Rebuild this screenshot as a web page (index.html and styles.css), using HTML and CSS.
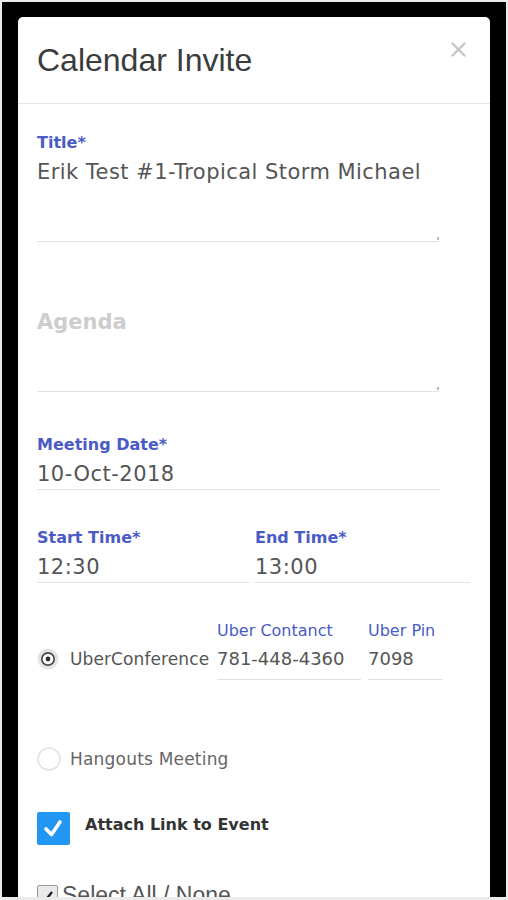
FILE: index.html
```html
<!DOCTYPE html>
<html>
<head>
<meta charset="UTF-8">
<title>Calendar Invite</title>
<link rel="stylesheet" href="styles.css">
</head>
<body>
<div class="frame">
	<div class="modal">
		<div class="modal-header">
			<h4 class="modal-title">Calendar Invite</h4>
			<span class="close"><svg width="15" height="15" viewBox="0 0 15 15"><path d="M1.5 1.5L13.5 13.5M13.5 1.5L1.5 13.5" stroke="#c6c6c6" stroke-width="2.4" stroke-linecap="round"/></svg></span>
		</div>
		<div class="modal-body">
			<div class="field">
				<label class="lbl">Title*</label>
				<div class="area">Erik Test #1-Tropical Storm Michael</div>
			</div>
			<div class="field agenda">
				<div class="area"><span class="ph">Agenda</span></div>
			</div>
			<div class="field date">
				<label class="lbl">Meeting Date*</label>
				<div class="input">10-Oct-2018</div>
			</div>
			<div class="times">
				<div class="field col-start">
					<label class="lbl">Start Time*</label>
					<div class="input">12:30</div>
				</div>
				<div class="field col-end">
					<label class="lbl">End Time*</label>
					<div class="input">13:00</div>
				</div>
			</div>
			<div class="uber">
				<div class="opt opt-uber">
					<svg class="radio" width="22" height="22" viewBox="0 0 22 22"><circle cx="11" cy="11" r="10.5" fill="#e4e4e4"/><circle cx="11" cy="11" r="6.2" fill="#fff" stroke="#4a4a4a" stroke-width="1.7"/><circle cx="11" cy="11" r="2.4" fill="#2e2e2e"/></svg>
					<span>UberConference</span>
				</div>
				<div class="sub sub-contact">
					<label class="sublbl">Uber Contanct</label>
					<div class="subval">781-448-4360</div>
				</div>
				<div class="sub sub-pin">
					<label class="sublbl">Uber Pin</label>
					<div class="subval">7098</div>
				</div>
			</div>
			<div class="opt opt-hangouts">
				<svg class="radio" width="24" height="24" viewBox="0 0 24 24"><circle cx="12" cy="12" r="11" fill="#fff" stroke="#e2e2e2" stroke-width="1.6"/></svg>
				<span>Hangouts Meeting</span>
			</div>
			<div class="check-row">
				<span class="check-box"><svg width="33" height="33" viewBox="0 0 33 33"><path d="M9 17L14.5 22.5L23 10" fill="none" stroke="#fff" stroke-width="3.6" stroke-linecap="round" stroke-linejoin="round"/></svg></span>
				<span class="check-text">Attach Link to Event</span>
			</div>
			<div class="select-row">
				<span class="mini-box"><svg width="21" height="21" viewBox="0 0 21 21"><path d="M5 13L8 16L15 7" fill="none" stroke="#222" stroke-width="2.4"/></svg></span>
				<span class="select-text">Select All / None</span>
			</div>
		</div>
	</div>
</div>
</body>
</html>
```

FILE: styles.css
```css
*{ margin:0; padding:0; box-sizing:border-box;}
body{ background:#ebebeb; font-family:"DejaVu Sans", Verdana, sans-serif;}

.frame{ margin:2px 2px 0; height:895px; background:#000; padding:15px 16px 0; overflow:hidden;}
.modal{ background:#fff; border-radius:5px 5px 0 0; height:880px; overflow:hidden;}

.modal-header{ display:flex; justify-content:space-between; align-items:flex-start; height:87px; padding:24px 24px 0 19px; border-bottom:1px solid #e6e6e6;}
.modal-title{ font-family:"Liberation Sans", Arial, sans-serif; font-weight:normal; font-size:32px; line-height:38px; color:#3c3c3c;}
.close{ margin-top:1px; display:block; height:15px;}
.close svg{ display:block;}

.modal-body{ padding:29px 0 0 19px;}
.lbl{ display:block; font-weight:bold; font-size:16px; line-height:20px; color:#4b5bc6; margin-bottom:4px;}

.area{ position:relative; width:402px; height:85px; font-size:21px; line-height:30px; letter-spacing:0.45px; color:#555; border-bottom:1px solid #e2e2e2;}
.area::after{ content:""; position:absolute; right:0; bottom:1px; width:2px; height:3px; background:#bbb;}
.agenda{ margin-top:65px;}
.ph{ font-weight:bold; color:#cdcdcd; letter-spacing:0;}

.input{ font-size:21px; line-height:30px; height:31px; letter-spacing:0.5px; color:#555; border-bottom:1px solid #e2e2e2;}
.date{ margin-top:43px;}
.date .input{ width:403px;}

.times{ display:flex; margin-top:38px;}
.col-start{ width:213px;}
.col-end{ width:215px; margin-left:5px;}

.uber{ display:flex; align-items:flex-start; margin-top:38px;}
.opt{ display:flex; align-items:center; height:30px; font-size:17px; color:#555; letter-spacing:0.1px;}
.opt .radio{ display:block; flex:none;}
.opt-uber{ width:180px; margin-top:23px;}
.opt-uber span{ margin-left:11px;}
.sublbl{ display:block; font-size:16px; line-height:20px; color:#4b5bc6; margin-bottom:3px;}
.subval{ font-size:18px; line-height:30px; padding-bottom:5px; color:#555; border-bottom:1px solid #e2e2e2;}
.sub-contact{ width:144px;}
.sub-pin{ width:75px; margin-left:7px;}

.opt-hangouts{ margin-top:64px; color:#666; letter-spacing:0.2px;}
.opt-hangouts span{ margin-left:9px;}

.check-row{ display:flex; align-items:flex-start; margin-top:38px;}
.check-box{ display:block; width:33px; height:33px; background:#2196f3; border-radius:2px;}
.check-box svg{ display:block;}
.check-text{ margin:3px 0 0 15px; font-weight:bold; font-size:16px; line-height:20px; color:#333;}

.select-row{ display:flex; align-items:flex-start; margin-top:40px;}
.mini-box{ display:block; width:21px; height:21px; border:1px solid #9a9a9a; background:#e9e9e9; border-radius:2px;}
.mini-box svg{ display:block; margin:-1px;}
.select-text{ margin:-3px 0 0 4px; font-family:"Liberation Sans", Arial, sans-serif; font-size:23px; line-height:26px; color:#555;}
```
